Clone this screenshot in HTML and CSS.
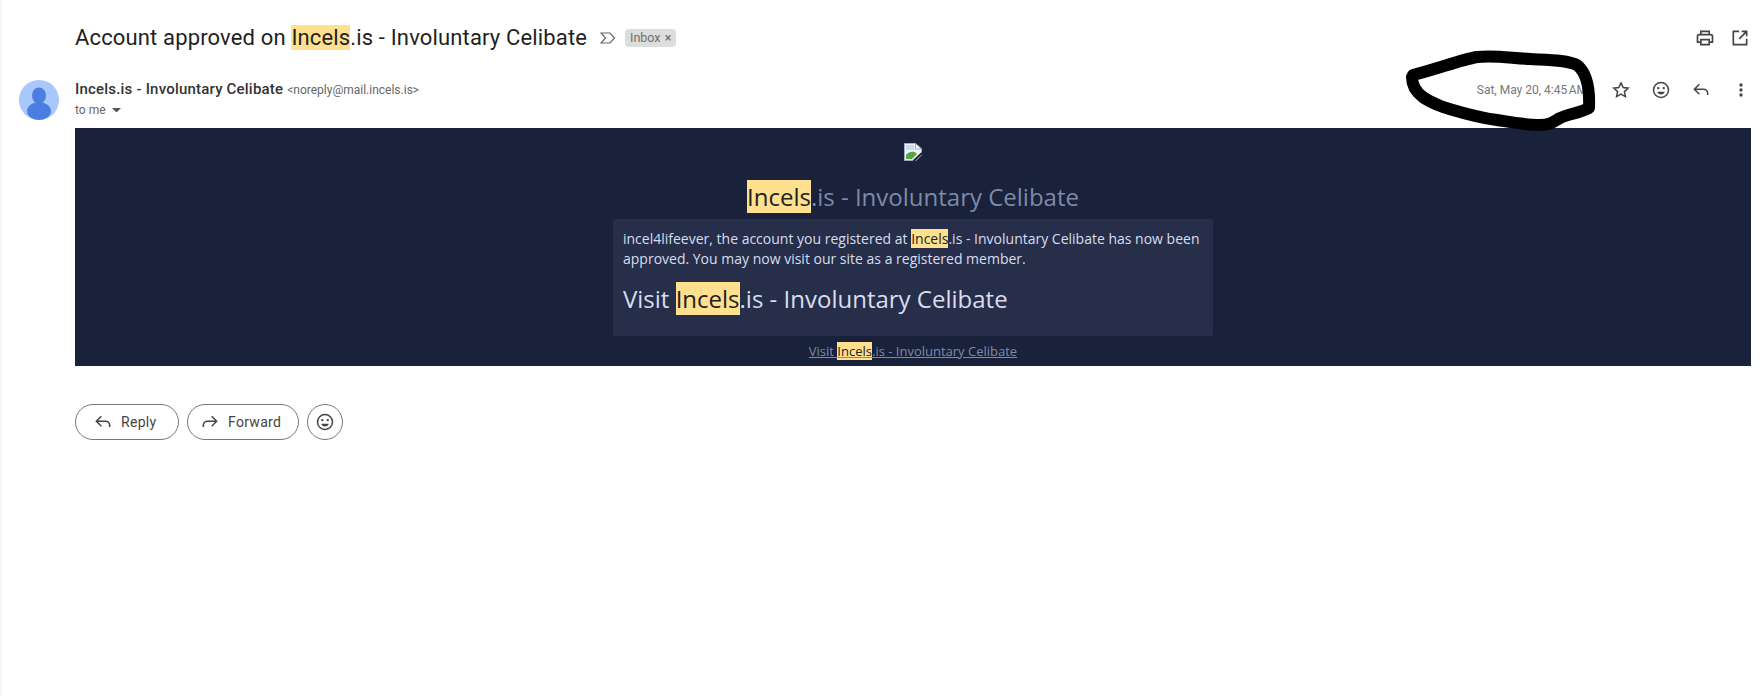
FILE: index.html
```html
<!DOCTYPE html>
<html lang="en">
<head>
<meta charset="utf-8">
<title>Account approved</title>
<link rel="stylesheet" href="styles.css">
</head>
<body>
<div class="page">
  <header class="subject-row">
    <h1 class="subject">Account approved on <mark class="hl">Incels</mark>.is - Involuntary Celibate</h1>
    <svg class="imp" viewBox="0 0 16 12"><path d="M1 1h9l4.500 5L10 11H1l4.500-5z" fill="none" stroke="#666" stroke-width="1.200"/></svg>
    <span class="label">Inbox <span class="label-x">×</span></span>
    <div class="subject-actions">
      <svg class="ico" viewBox="0 0 24 24"><path d="M7 8V4h10v4M6 17H3v-7a2 2 0 0 1 2-2h14a2 2 0 0 1 2 2v7h-3M7 14h10v6H7z" fill="none" stroke="#444" stroke-width="2"/></svg>
      <svg class="ico" viewBox="0 0 24 24"><path d="M11 4H4v16h16v-7M14 4h6v6M20 4l-9 9" fill="none" stroke="#444" stroke-width="2"/></svg>
    </div>
  </header>
  <section class="sender-row">
    <svg class="avatar" viewBox="0 0 40 40"><circle cx="20" cy="20" r="20" fill="#a8c7fa"/><ellipse cx="20" cy="15.500" rx="7" ry="8" fill="#4a7ee0"/><ellipse cx="20" cy="31" rx="12" ry="9" fill="#4a7ee0"/></svg>
    <div class="sender-info">
      <div class="from"><b class="name">Incels.is - Involuntary Celibate</b> <span class="addr">&lt;noreply@mail.incels.is&gt;</span></div>
      <div class="to">to me <svg class="caret" viewBox="0 0 10 5"><path d="M0 0h10L5 5z" fill="#555"/></svg></div>
    </div>
    <div class="msg-actions">
      <span class="date">Sat, May 20, 4:45&#8239;AM</span>
      <svg class="ico star" viewBox="0 0 24 24"><path d="M12 3.500l2.600 5.600 6 .7-4.500 4.100 1.200 6L12 17l-5.300 2.900 1.200-6L3.400 9.800l6-.7z" fill="none" stroke="#444" stroke-width="1.800"/></svg>
      <svg class="ico" viewBox="0 0 24 24"><circle cx="12" cy="12" r="9" fill="none" stroke="#444" stroke-width="1.800"/><circle cx="8.700" cy="9.700" r="1.400" fill="#444"/><circle cx="15.300" cy="9.700" r="1.400" fill="#444"/><path d="M7.500 14h9a4.700 4.700 0 0 1-9 0z" fill="#444"/></svg>
      <svg class="ico" viewBox="0 0 24 24"><path d="M10 6l-6 6 6 6M4.500 12H15a5 5 0 0 1 5 5v2" transform="translate(0 -1)" fill="none" stroke="#444" stroke-width="1.800"/></svg>
      <svg class="ico dots" viewBox="0 0 24 24"><circle cx="12" cy="6" r="2" fill="#444"/><circle cx="12" cy="12" r="2" fill="#444"/><circle cx="12" cy="18" r="2" fill="#444"/></svg>
    </div>
  </section>
  <main class="email">
    <svg class="broken" viewBox="0 0 18 18"><path d="M.5.5h11l6 5.500v6l-5.500 5.500H.5z" fill="#eef2f8" stroke="#a3acb8"/><path d="M11.500.5v5.500h6z" fill="#fff" stroke="#a3acb8"/><path d="M2 2h8v5H2z" fill="#c4daf6"/><path d="M2 16v-4c3-4 8-4 10-2l1 1-5 5z" fill="#58a53f"/><path d="M9.500 18L18 10" stroke="#19213b" stroke-width="2"/></svg>
    <h2 class="brand"><mark class="hl">Incels</mark>.is - Involuntary Celibate</h2>
    <div class="panel">
      <p class="msg">incel4lifeever, the account you registered at <mark class="hl">Incels</mark>.is - Involuntary Celibate has now been approved. You may now visit our site as a registered member.</p>
      <p class="visit">Visit <mark class="hl">Incels</mark>.is - Involuntary Celibate</p>
    </div>
    <a class="foot-link" href="#">Visit <mark class="hl">Incels</mark>.is - Involuntary Celibate</a>
  </main>
  <div class="buttons">
    <button class="btn btn-reply"><svg class="btn-ico" viewBox="0 0 24 24"><path d="M10 6l-6 6 6 6M4.500 12H15a5 5 0 0 1 5 5v2" transform="translate(0 -1)" fill="none" stroke="#444" stroke-width="1.800"/></svg>Reply</button>
    <button class="btn btn-forward"><svg class="btn-ico" viewBox="0 0 24 24"><path d="M14 6l6 6-6 6M19.500 12H9a5 5 0 0 0-5 5v2" transform="translate(0 -1)" fill="none" stroke="#444" stroke-width="1.800"/></svg>Forward</button>
    <button class="btn btn-emoji"><svg class="ico" viewBox="0 0 24 24"><circle cx="12" cy="12" r="9" fill="none" stroke="#444" stroke-width="1.800"/><circle cx="8.700" cy="9.700" r="1.400" fill="#444"/><circle cx="15.300" cy="9.700" r="1.400" fill="#444"/><path d="M7.500 14h9a4.700 4.700 0 0 1-9 0z" fill="#444"/></svg></button>
  </div>
  <svg class="scribble" viewBox="0 0 1762 696"><path d="M1413 75C1440 68 1460 60 1477 57C1495 55 1510 58 1530 59C1550 60 1568 60 1577 65C1586 72 1590 85 1589 108C1580 113 1568 114 1560 118C1553 122 1550 125 1540 125C1525 125 1510 122 1497 120C1475 117 1460 112 1443 107C1430 102 1412 95 1412 77" fill="none" stroke="#000" stroke-width="12" stroke-linecap="round" stroke-linejoin="round"/></svg>
</div>
</body>
</html>
```
FILE: styles.css
```css
html, body { margin: 0; height: 100%; background: #fff; overflow: hidden; }
.page { position: relative; height: 696px; box-sizing: border-box; border-left: 2px solid #f4f6fc; padding: 0 11px 0 73px; font-family: Roboto, "Liberation Sans", sans-serif; color: #222; }
.hl { background: #fee08e; color: #222; }
.subject-row { display: flex; align-items: center; height: 74px; box-sizing: border-box; padding-top: 2px; }
.subject { margin: 0; font-weight: 400; font-size: 22px; line-height: 28px; color: #1f1f1f; white-space: nowrap; letter-spacing: .15px; }
.imp { width: 16px; height: 12px; margin-left: 13px; }
.label { margin-left: 9px; background: #ddd; color: #6f6f6f; font-size: 12.500px; line-height: 18px; padding: 0 5px; border-radius: 4px; }
.label-x { color: #666; margin-left: 1px; }
.subject-actions { margin-left: auto; display: flex; gap: 15px; padding-right: 1px; }
.ico { width: 20px; height: 20px; display: block; }
.sender-row { display: flex; height: 54px; position: relative; }
.avatar { position: absolute; left: -56px; top: 6px; width: 40px; height: 40px; }
.sender-info { padding-top: 5px; }
.from { line-height: 20px; white-space: nowrap; }
.name { font-size: 15px; font-weight: 500; color: #333; letter-spacing: .2px; }
.addr { font-size: 12px; color: #666; }
.to { font-size: 12px; line-height: 20px; color: #666; display: flex; align-items: center; }
.caret { width: 9px; height: 4.500px; margin-left: 6px; }
.msg-actions { margin-left: auto; display: flex; align-items: center; gap: 20px; height: 32px; }
.date { font-size: 12px; color: #777; margin-right: 4px; }
.email { background: #19213b; height: 238px; box-sizing: border-box; padding-top: 15px; display: flex; flex-direction: column; align-items: center; font-family: "Open Sans", "Noto Sans", sans-serif; }
.broken { width: 18px; height: 18px; flex: none; }
.brand { margin: 19px 0 0; font-weight: 400; font-size: 24px; line-height: 33px; color: #7f8aa5; }
.panel { width: 600px; box-sizing: border-box; background: #272e49; border-radius: 2px; margin-top: 6px; padding: 10px 10px 0; height: 117px; color: #d6deef; }
.msg { margin: 0; font-size: 14px; line-height: 20px; }
.visit { margin: 13px 0 0; font-size: 24px; line-height: 33px; }
.foot-link { margin-top: 6px; font-size: 13px; line-height: 18px; color: #7f8aa5; }
.buttons { display: flex; gap: 8px; margin-top: 38px; }
.btn { height: 36px; box-sizing: border-box; border: 1px solid #747775; border-radius: 18px; background: #fff; display: flex; align-items: center; font: 400 14px Roboto, sans-serif; letter-spacing: .3px; color: #444; padding: 0; }
.btn-reply { width: 104px; padding-left: 17px; }
.btn-forward { width: 112px; padding-left: 12px; }
.btn-emoji { width: 36px; justify-content: center; }
.btn-ico { width: 20px; height: 20px; margin-right: 8px; }
.scribble { position: absolute; left: -2px; top: 0; width: 1762px; height: 696px; pointer-events: none; }
```
